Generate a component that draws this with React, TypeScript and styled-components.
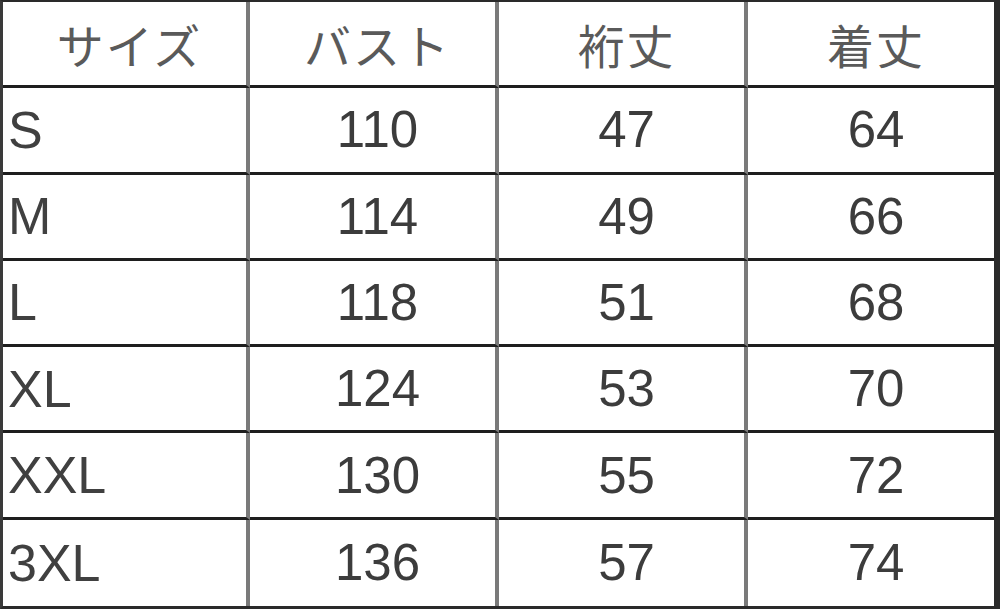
import React from "react";
import styled, { createGlobalStyle } from "styled-components";

const Global = createGlobalStyle`
  html, body { margin: 0; padding: 0; background: #ffffff; }
  #root { width: 1000px; height: 609px; }
`;

const Table = styled.div`
  box-sizing: border-box;
  width: 1000px;
  height: 609px;
  display: grid;
  grid-template-columns: 247px 249px 249px 1fr;
  grid-template-rows: repeat(7, 1fr);
  border-top: 2px solid #2a2a2a;
  border-left: 3px solid #3a3a3a;
  border-right: 6px solid #2a2a2a;
  border-bottom: 3px solid #2a2a2a;
  background: #ffffff;
`;

const Cell = styled.div<{ $align: "left" | "center"; $lastCol: boolean; $lastRow: boolean }>`
  box-sizing: border-box;
  display: flex;
  align-items: center;
  justify-content: ${(p) => (p.$align === "left" ? "flex-start" : "center")};
  padding-left: ${(p) => (p.$align === "left" ? "5px" : "10px")};
  border-right: ${(p) => (p.$lastCol ? "none" : "4px solid #7a7a7a")};
  border-bottom: ${(p) => (p.$lastRow ? "none" : "3px solid #1e1e1e")};
  color: #3a3a3a;
  line-height: 1;
  min-width: 0;
`;

const HeadText = styled.span`
  font-family: "Noto Sans CJK JP", "Noto Sans", sans-serif;
  font-size: 47px;
  font-weight: 400;
  color: #5a5a5a;
  letter-spacing: 2px;
`;

const SizeText = styled.span`
  font-family: "Liberation Sans", Arial, sans-serif;
  font-size: 52px;
  color: #404040;
`;

const NumText = styled.span`
  font-family: "Liberation Sans", Arial, sans-serif;
  font-size: 51px;
  color: #3c3c3c;
`;

const headers = ["サイズ", "バスト", "裄丈", "着丈"];
const rows: [string, number, number, number][] = [
  ["S", 110, 47, 64],
  ["M", 114, 49, 66],
  ["L", 118, 51, 68],
  ["XL", 124, 53, 70],
  ["XXL", 130, 55, 72],
  ["3XL", 136, 57, 74],
];

export default function App() {
  return (
    <>
      <Global />
      <Table>
        {headers.map((h, i) => (
          <Cell key={h} $align="center" $lastCol={i === 3} $lastRow={false}>
            <HeadText>{h}</HeadText>
          </Cell>
        ))}
        {rows.map((r, ri) =>
          r.map((v, ci) => (
            <Cell
              key={`${ri}-${ci}`}
              $align={ci === 0 ? "left" : "center"}
              $lastCol={ci === 3}
              $lastRow={ri === rows.length - 1}
            >
              {ci === 0 ? <SizeText>{v}</SizeText> : <NumText>{v}</NumText>}
            </Cell>
          ))
        )}
      </Table>
    </>
  );
}
